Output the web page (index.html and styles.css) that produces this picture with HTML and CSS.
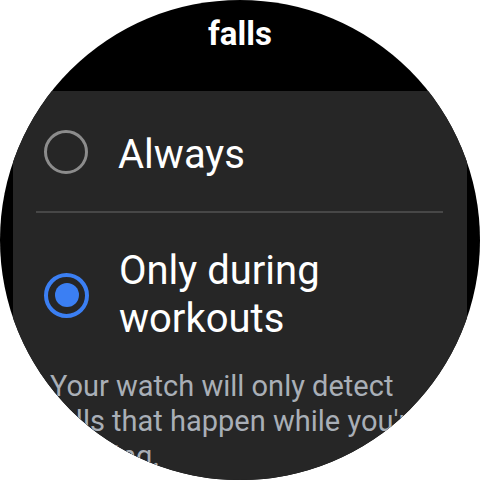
FILE: index.html
```html
<!DOCTYPE html>
<html>
<head>
<meta charset="utf-8">
<link rel="stylesheet" href="styles.css">
</head>
<body>
<div class="watch">
  <div class="title">falls</div>
  <div class="card">
    <div class="row">
      <span class="radio"></span>
      <span class="label">Always</span>
    </div>
    <div class="divider"></div>
    <div class="row row-two">
      <span class="radio radio-on"><span class="dot"></span></span>
      <span class="label">Only during<br>workouts</span>
    </div>
    <p class="desc">Your watch will only detect falls that happen while you're working.</p>
  </div>
</div>
</body>
</html>
```
FILE: styles.css
```css
html, body {
  margin: 0;
  padding: 0;
  background: #ffffff;
}
.watch {
  width: 480px;
  height: 480px;
  border-radius: 50%;
  overflow: hidden;
  background: #000000;
  font-family: Roboto, "Liberation Sans", sans-serif;
  display: flex;
  flex-direction: column;
  align-items: center;
}
.title {
  padding-top: 14px;
  font-size: 33px;
  line-height: 40px;
  font-weight: 700;
  color: #ffffff;
  text-align: center;
}
.card {
  margin-top: 37px;
  width: 454px;
  flex: 1 0 auto;
  background: #262626;
  border-radius: 30px 30px 0 0;
  padding-top: 40px;
  box-sizing: border-box;
}
.row {
  display: flex;
  align-items: center;
  gap: 30px;
  padding-left: 31px;
}
.row-two {
  padding-top: 34px;
}
.radio {
  width: 44px;
  height: 44px;
  box-sizing: border-box;
  border-radius: 50%;
  border: 3px solid #8c8c8c;
  flex: 0 0 auto;
  display: flex;
  align-items: center;
  justify-content: center;
  margin-top: -6px;
}
.radio-on {
  width: 45px;
  height: 45px;
  border: 4px solid #3b7ff3;
  margin-top: 0;
}
.dot {
  width: 24px;
  height: 24px;
  border-radius: 50%;
  background: #3b7ff3;
}
.label {
  font-size: 40px;
  line-height: 48px;
  color: #ffffff;
}
.divider {
  margin: 32px 24px 0 23px;
  height: 2px;
  background: #474747;
}
.desc {
  margin: 26px 0 0 37px;
  width: 400px;
  font-size: 29px;
  line-height: 35px;
  color: #a9afb7;
}
```
